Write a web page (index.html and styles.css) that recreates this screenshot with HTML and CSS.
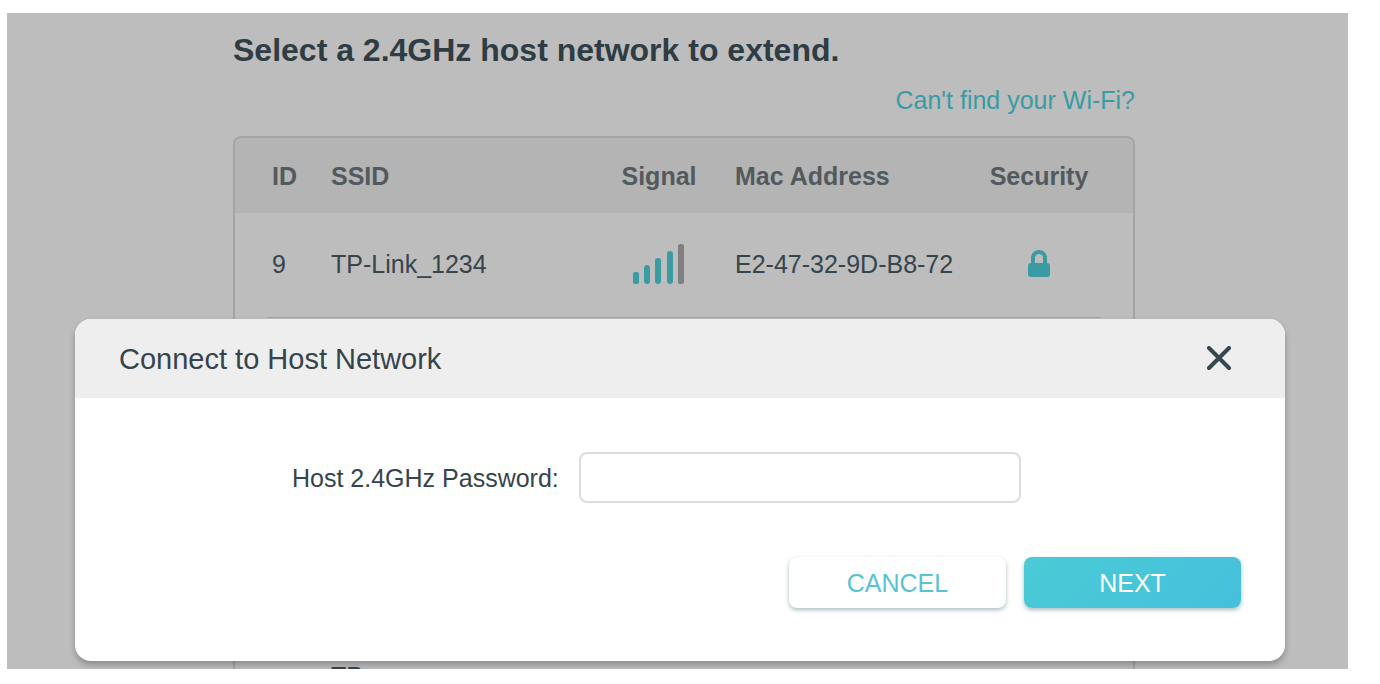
FILE: index.html
```html
<!DOCTYPE html>
<html lang="en">
<head>
    <meta charset="UTF-8">
    <meta name="viewport" content="width=device-width, initial-scale=1.0">
    <title>Connect to Host Network</title>
    <link rel="stylesheet" href="styles.css">
</head>
<body>
    <div class="screen">
        <main class="content">
            <h1>Select a 2.4GHz host network to extend.</h1>
            <div class="help">
                <a href="#">Can't find your Wi-Fi?</a>
            </div>

            <div class="table-box">
                <table class="networks">
                    <thead>
                        <tr>
                            <th class="col-id">ID</th>
                            <th class="col-ssid">SSID</th>
                            <th class="col-signal">Signal</th>
                            <th class="col-mac">Mac Address</th>
                            <th class="col-security">Security</th>
                        </tr>
                    </thead>
                    <tbody>
                        <tr>
                            <td class="col-id">9</td>
                            <td>TP-Link_1234</td>
                            <td class="col-signal">
                                <svg class="signal" width="52" height="40" viewBox="0 0 52 40" aria-label="Signal 4 of 5">
                                    <g fill="#3a9ba3">
                                        <rect x="0" y="28" width="6" height="12" rx="2"/>
                                        <rect x="11" y="21" width="6" height="19" rx="3"/>
                                        <rect x="22" y="14" width="6" height="26" rx="3"/>
                                        <rect x="34" y="7" width="6" height="33" rx="3"/>
                                    </g>
                                    <rect x="45" y="0" width="6" height="40" rx="2" fill="#7f7f7f"/>
                                </svg>
                            </td>
                            <td class="col-mac">E2-47-32-9D-B8-72</td>
                            <td class="col-security">
                                <svg class="lock" width="22" height="28" viewBox="0 0 22 28" aria-label="Secured">
                                    <path d="M5 14V8a6 6 0 0 1 12 0v6" fill="none" stroke="#3a9ba3" stroke-width="4"/>
                                    <rect x="0" y="13" width="22" height="14" rx="3" fill="#3a9ba3"/>
                                </svg>
                            </td>
                        </tr>
                        <tr><td colspan="5"></td></tr>
                        <tr><td colspan="5"></td></tr>
                        <tr><td colspan="5"></td></tr>
                        <tr class="wrapped">
                            <td></td>
                            <td>TP</td>
                            <td colspan="3"></td>
                        </tr>
                    </tbody>
                </table>
            </div>
        </main>

        <form class="modal" role="dialog" aria-labelledby="modalTitle">
            <div class="modal-header">
                <h2 id="modalTitle">Connect to Host Network</h2>
                <button type="button" class="close" aria-label="Close">
                    <svg width="26" height="26" viewBox="0 0 26 26">
                        <path d="M3 2L23 22M23 2L3 22" fill="none" stroke="#35474f" stroke-width="4" stroke-linecap="round"/>
                    </svg>
                </button>
            </div>
            <div class="modal-body">
                <div class="field">
                    <label for="password">Host 2.4GHz Password:</label>
                    <input type="password" id="password">
                </div>
                <div class="actions">
                    <button type="button" class="btn">CANCEL</button>
                    <button type="button" class="btn btn-primary">NEXT</button>
                </div>
            </div>
        </form>
    </div>
</body>
</html>
```

FILE: styles.css
```css
:root {
    --teal: #3a9ba3;
    --cyan: #4acbd6;
    --line: #a4a4a4;
    --text: #36444b;
}

* {
    box-sizing: border-box;
}

body {
    margin: 0;
    padding: 13px 32px 15px 7px;
    background-color: white;
    color: var(--text);
    font-family: "Liberation Sans", Arial, sans-serif;
    font-size: 25px;
    line-height: 30px;
}

.screen {
    position: relative;
    height: calc(100vh - 28px);
    overflow: hidden;
    background-color: #bdbdbd;
}

.content {
    margin: 0 213px 0 226px;
    padding-top: 17px;
}

h1 {
    margin: 0;
    color: #2f3c43;
    font-size: 32px;
    line-height: 40px;
    white-space: nowrap;
}

.help {
    padding: 15px 0 21px;
    text-align: right;
}

.help a {
    color: var(--teal);
    text-decoration: none;
}

/* Network list */
.table-box {
    border: 2px solid var(--line);
    border-radius: 8px;
    overflow: hidden;
}

.networks {
    width: 100%;
    table-layout: fixed;
    border-collapse: collapse;
}

.networks th,
.networks td {
    padding: 0;
    text-align: left;
}

.networks th {
    height: 75px;
    background-color: #b4b4b4;
    color: #535a5e;
}

.networks td {
    height: 105px;
    padding-bottom: 4px;
}

.networks tbody tr {
    background: linear-gradient(var(--line), var(--line)) center bottom / calc(100% - 64px) 1px no-repeat;
}

.networks .col-id {
    width: 96px;
    padding-left: 37px;
}

.networks .col-signal {
    width: 112px;
    text-align: center;
}

.networks .col-mac {
    width: 250px;
    padding-left: 20px;
    white-space: nowrap;
}

.networks .col-security {
    width: 168px;
    padding-right: 20px;
    text-align: center;
}

.networks .wrapped td {
    padding-top: 28px;
    vertical-align: top;
}

.signal,
.lock {
    display: block;
    margin: 0 auto;
}

/* Modal */
.modal {
    position: absolute;
    top: 306px;
    left: 68px;
    right: 63px;
    border-radius: 16px;
    background-color: white;
    box-shadow: 0 4px 6px rgba(0, 0, 0, 0.25);
}

.modal-header {
    display: flex;
    align-items: center;
    justify-content: space-between;
    height: 79px;
    padding: 0 53px 0 44px;
    border-radius: 16px 16px 0 0;
    background-color: #eeeeee;
}

.modal-header h2 {
    margin: 0;
    font-size: 29px;
    font-weight: normal;
}

.close {
    padding: 0;
    border: none;
    background: none;
    cursor: pointer;
}

.close svg {
    display: block;
}

.modal-body {
    padding: 54px 44px 53px;
}

.field {
    display: flex;
    align-items: center;
    gap: 20px;
    padding: 0 220px 0 173px;
}

.field label {
    white-space: nowrap;
}

.field input {
    flex: 1;
    min-width: 0;
    height: 51px;
    padding: 0 16px;
    border: 2px solid #dddddd;
    border-radius: 8px;
    font: inherit;
}

.actions {
    display: flex;
    justify-content: flex-end;
    gap: 18px;
    margin-top: 54px;
}

.btn {
    width: 217px;
    height: 51px;
    border: none;
    border-radius: 8px;
    background-color: white;
    box-shadow: 0 2px 4px rgba(40, 90, 100, 0.4);
    color: #5ac3d1;
    font: inherit;
    cursor: pointer;
}

.btn-primary {
    background: linear-gradient(135deg, var(--cyan), #45c0dc);
    color: white;
}
```
